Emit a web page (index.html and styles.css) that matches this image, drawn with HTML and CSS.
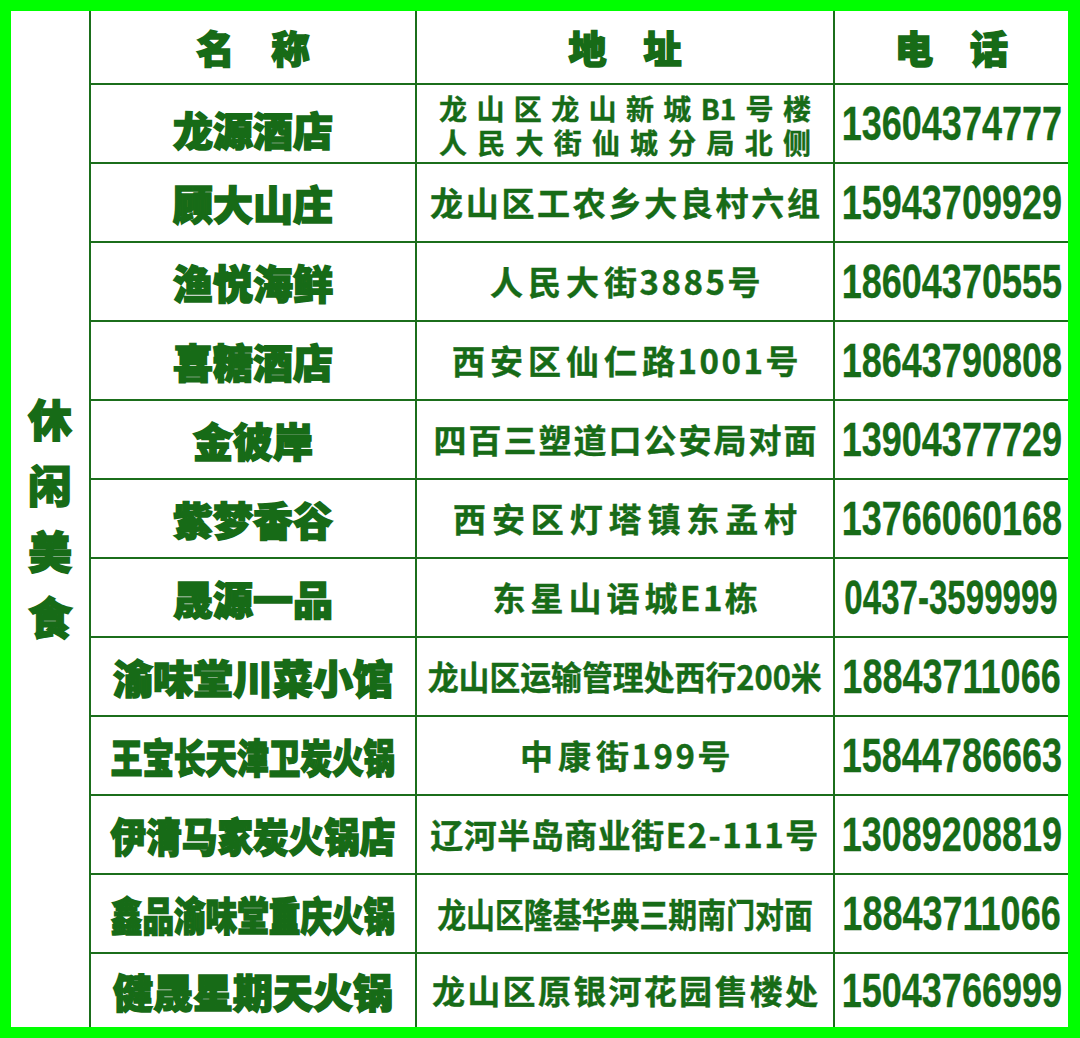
FILE: index.html
```html
<!DOCTYPE html>
<html lang="zh-CN">
<head>
<meta charset="utf-8">
<title>休闲美食</title>
<link rel="stylesheet" href="styles.css">
</head>
<body>
<div class="frame">
  <div class="table">
    <div class="side"><span class="side-text">休闲美食</span></div>

    <div class="cell head"><span class="head-text">名称</span></div>
    <div class="cell head"><span class="head-text">地址</span></div>
    <div class="cell head"><span class="head-text">电话</span></div>

    <div class="cell name name-first"><span class="n">龙源酒店</span></div>
    <div class="cell addr">
      <div class="addr-two">
        <div class="addr-line">龙山区龙山新城B1号楼</div>
        <div class="addr-line">人民大街仙城分局北侧</div>
      </div>
    </div>
    <div class="cell tel"><span class="num">13604374777</span></div>

    <div class="cell name"><span class="n">顾大山庄</span></div>
    <div class="cell addr"><span class="a w390">龙山区工农乡大良村六组</span></div>
    <div class="cell tel"><span class="num">15943709929</span></div>

    <div class="cell name"><span class="n">渔悦海鲜</span></div>
    <div class="cell addr"><span class="s ls5">人民大<span class="g">街3885号</span></span></div>
    <div class="cell tel"><span class="num">18604370555</span></div>

    <div class="cell name"><span class="n">喜糖酒店</span></div>
    <div class="cell addr"><span class="s ls5">西安区仙仁<span class="g">路1001号</span></span></div>
    <div class="cell tel"><span class="num">18643790808</span></div>

    <div class="cell name"><span class="n">金彼岸</span></div>
    <div class="cell addr"><span class="a w383">四百三塑道口公安局对面</span></div>
    <div class="cell tel"><span class="num">13904377729</span></div>

    <div class="cell name"><span class="n">紫梦香谷</span></div>
    <div class="cell addr"><span class="a w344">西安区灯塔镇东孟村</span></div>
    <div class="cell tel"><span class="num">13766060168</span></div>

    <div class="cell name"><span class="n">晟源一品</span></div>
    <div class="cell addr"><span class="s ls5">东星山语<span class="g">城E1栋</span></span></div>
    <div class="cell tel"><span class="num num-narrow">0437-3599999</span></div>

    <div class="cell name"><span class="n">渝味堂川菜小馆</span></div>
    <div class="cell addr"><span class="a squeeze1">龙山区运输管理处西行200米</span></div>
    <div class="cell tel"><span class="num">18843711066</span></div>

    <div class="cell name"><span class="n n9">王宝长天津卫炭火锅</span></div>
    <div class="cell addr"><span class="s ls5">中康<span class="g">街199号</span></span></div>
    <div class="cell tel"><span class="num">15844786663</span></div>

    <div class="cell name"><span class="n n8">伊清马家炭火锅店</span></div>
    <div class="cell addr"><span class="s ls1">辽河半岛商业<span class="g g-tight">街E2-111号</span></span></div>
    <div class="cell tel"><span class="num">13089208819</span></div>

    <div class="cell name"><span class="n n9">鑫品渝味堂重庆火锅</span></div>
    <div class="cell addr"><span class="a squeeze2">龙山区隆基华典三期南门对面</span></div>
    <div class="cell tel"><span class="num">18843711066</span></div>

    <div class="cell name"><span class="n">健晟星期天火锅</span></div>
    <div class="cell addr"><span class="a w386">龙山区原银河花园售楼处</span></div>
    <div class="cell tel"><span class="num">15043766999</span></div>
  </div>
</div>
</body>
</html>
```

FILE: styles.css
```css
html, body {
  margin: 0;
  padding: 0;
}

body {
  width: 1080px;
  height: 1038px;
  background: #00ff00;
  font-family: "Noto Sans CJK SC", "Noto Sans", sans-serif;
  color: #176b17;
}

.frame {
  padding: 11px 12px 11px 11px;
}

.table {
  display: grid;
  grid-template-columns: 78px 324px 416px 233px;
  grid-template-rows: 72px repeat(11, 77px) 73px;
  column-gap: 2px;
  row-gap: 2px;
  background: #1b6e1b;
  height: 1016px;
}

.side {
  grid-row: 1 / -1;
  grid-column: 1;
  background: #fff;
  display: flex;
  align-items: center;
  justify-content: center;
}

.side-text {
  writing-mode: vertical-rl;
  font-size: 44px;
  font-weight: 900;
  letter-spacing: 22px;
  padding-top: 22px;
  line-height: 1;
  -webkit-text-stroke: 1.4px #176b17;
}

.cell {
  background: #fff;
  display: flex;
  align-items: center;
  justify-content: center;
  white-space: nowrap;
  overflow: hidden;
}

.head-text {
  font-size: 38px;
  font-weight: 900;
  letter-spacing: 37px;
  padding-left: 37px;
  line-height: 1;
  -webkit-text-stroke: 1.6px #176b17;
}

.name {
  font-size: 40px;
  font-weight: 900;
  line-height: 1;
}

.n {
  display: inline-block;
  -webkit-text-stroke: 1.6px #176b17;
}

.n8 {
  transform: scaleX(0.89);
}

.n9 {
  transform: scaleX(0.79);
}

.name-first {
  padding-top: 10px;
  box-sizing: border-box;
}

.addr {
  font-weight: 700;
}

.a {
  display: inline-block;
  font-size: 33px;
  line-height: 1;
  white-space: normal;
  text-align: justify;
  text-align-last: justify;
  -webkit-text-stroke: 0.4px #176b17;
}

.s {
  display: inline-block;
  font-size: 33px;
  line-height: 1;
  -webkit-text-stroke: 0.4px #176b17;
}

.ls5 { letter-spacing: 5px; padding-left: 3px; }
.ls1 { letter-spacing: 0.5px; }

.g {
  display: inline-block;
  white-space: nowrap;
  letter-spacing: 2.5px;
}

.g-tight {
  letter-spacing: 1.5px;
}

.w344 { width: 344px; }
.w383 { width: 383px; }
.w386 { width: 386px; }
.w390 { width: 390px; }

.squeeze1 {
  white-space: nowrap;
  text-align: left;
  text-align-last: auto;
  transform: scaleX(0.935);
}

.squeeze2 {
  white-space: nowrap;
  text-align: left;
  text-align-last: auto;
  font-size: 34px;
  transform: scaleX(0.85);
}

.addr-two {
  width: 372px;
  font-size: 28px;
  line-height: 28px;
  display: flex;
  flex-direction: column;
  gap: 6px;
  padding-top: 2px;
  -webkit-text-stroke: 0.4px #176b17;
}

.addr-line {
  text-align: justify;
  text-align-last: justify;
}

.tel {
  font-family: "Liberation Sans", Arial, sans-serif;
}

.num {
  display: inline-block;
  font-size: 49px;
  font-weight: 700;
  line-height: 1;
  transform: scaleX(0.735);
  -webkit-text-stroke: 0.3px #176b17;
}

.num-narrow {
  transform: scaleX(0.675);
}
```
